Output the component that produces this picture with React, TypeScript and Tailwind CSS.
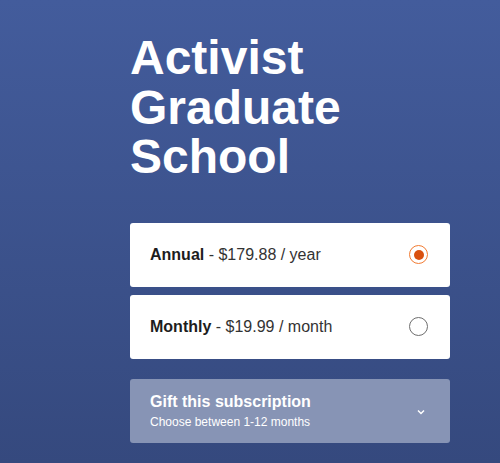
import React from "react";

export default function App() {
  return (
    <div
      className="w-[500px] h-[463px] overflow-hidden bg-gradient-to-b from-[#435c9c] to-[#35497e]"
      style={{ fontFamily: '"Liberation Sans", Arial, sans-serif' }}
    >
      <div className="ml-[130px] w-[320px] pt-[33px]">
        <h1 className="text-[48px] leading-[49.5px] font-bold text-white">
          Activist
          <br />
          Graduate
          <br />
          School
        </h1>
        <div className="mt-[41px] flex flex-col gap-2">
          <div className="h-16 bg-white rounded-[3px] flex items-center justify-between pl-5 pr-[22px]">
            <div className="text-[16px] text-[#333]">
              <span className="font-bold text-[#1d1d1d]">Annual</span> - $179.88 / year
            </div>
            <div className="w-[19px] h-[19px] rounded-full border-[1.5px] border-[#f27b32] flex items-center justify-center">
              <div className="w-[10px] h-[10px] rounded-full bg-[#d9500f]" />
            </div>
          </div>
          <div className="h-16 bg-white rounded-[3px] flex items-center justify-between pl-5 pr-[22px]">
            <div className="text-[16px] text-[#333]">
              <span className="font-bold text-[#1d1d1d]">Monthly</span> - $19.99 / month
            </div>
            <div className="w-[19px] h-[19px] rounded-full border border-[#6e6e6e]" />
          </div>
        </div>
        <div className="mt-5 h-16 bg-[#8794b5] rounded-[3px] flex items-center justify-between pl-5 pr-[25px]">
          <div className="flex flex-col text-white">
            <span className="text-[16px] font-bold leading-[20px]">Gift this subscription</span>
            <span className="text-[12px] leading-[16px] mt-[2px]">Choose between 1-12 months</span>
          </div>
          <svg width="8" height="6" viewBox="0 0 8 6" className="mt-[2px]">
            <path d="M1 1.5 L4 4.5 L7 1.5" stroke="white" strokeWidth="1.5" fill="none" />
          </svg>
        </div>
      </div>
    </div>
  );
}
